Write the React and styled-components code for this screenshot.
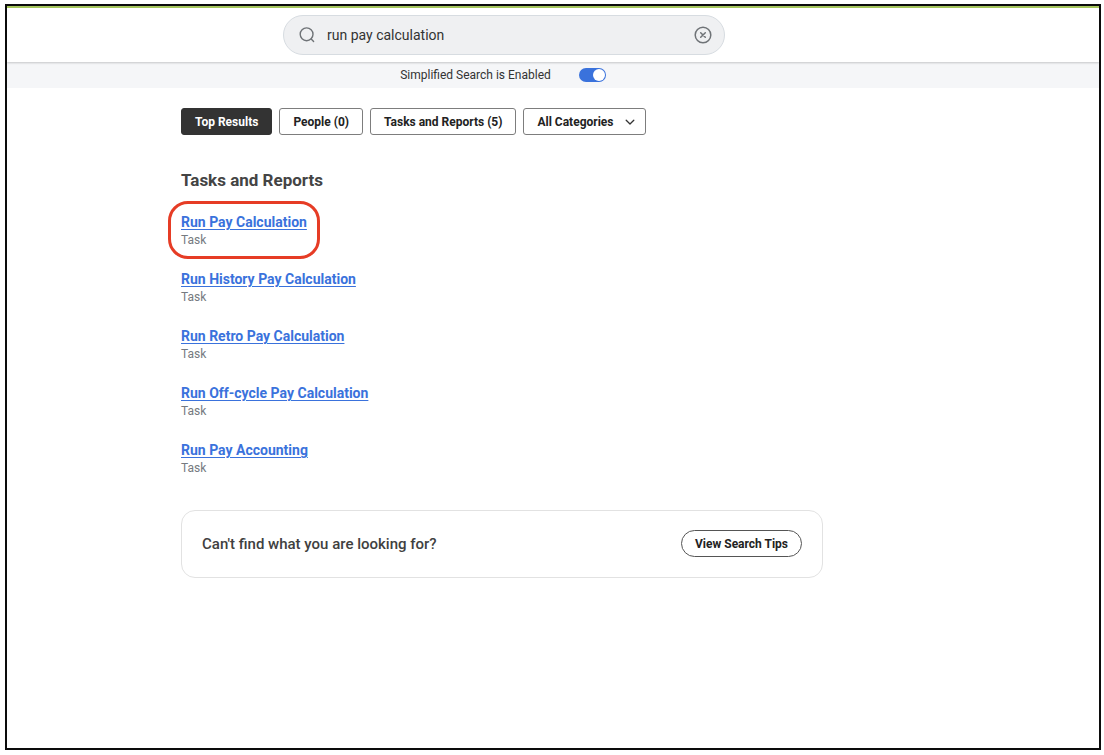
import React, { useState } from "react";
import styled, { createGlobalStyle, css } from "styled-components";

const GlobalStyle = createGlobalStyle`
  *, *::before, *::after { box-sizing: border-box; }
  body {
    margin: 0;
    background: #ffffff;
    color: #333333;
    font-family: Roboto, "Liberation Sans", sans-serif;
  }
  button, input, select { font-family: inherit; }
`;

const Page = styled.div`
  display: flex;
  min-height: 100vh;
  padding: 4px 3px 5px 5px;
`;

const Frame = styled.div`
  flex: 1;
  display: flex;
  flex-direction: column;
  border: 2px solid #0c0c0c;
`;

const Header = styled.header`
  position: relative;
  display: flex;
  justify-content: center;
  padding: 7px 100px 7px 2px;
  border-top: 2px solid #a5c55c;
  background: #ffffff;
  box-shadow: 0 1px 2px rgba(0, 0, 0, 0.2);
`;

const SearchBox = styled.form`
  display: flex;
  align-items: center;
  width: 442px;
  height: 40px;
  padding: 0 12px 0 15px;
  border: 1px solid #d7dce1;
  border-radius: 20px;
  background: #eff0f2;
  color: #6f7377;
`;

const SearchInput = styled.input`
  flex: 1;
  min-width: 0;
  height: 24px;
  margin: 0 12px;
  padding: 0;
  border: 0;
  outline: 0;
  background: transparent;
  color: #333333;
  font-size: 14px;
`;

const IconButton = styled.button`
  display: flex;
  padding: 0;
  border: 0;
  background: transparent;
  color: inherit;
  cursor: pointer;
`;

const ModeBar = styled.div`
  display: flex;
  justify-content: center;
  height: 26px;
  padding-right: 100px;
  background: #f5f6f8;
`;

const ModeLabel = styled.label`
  display: flex;
  align-items: center;
  gap: 28px;
  color: #333333;
  font-size: 12px;
`;

const Toggle = styled.input`
  appearance: none;
  display: flex;
  width: 27px;
  height: 14px;
  margin: 0;
  padding: 1px;
  border-radius: 7px;
  background: #a0a5ab;
  cursor: pointer;

  &::before {
    content: "";
    width: 12px;
    height: 12px;
    border-radius: 50%;
    background: #ffffff;
  }

  &:checked {
    justify-content: flex-end;
    background: #3a72dc;
  }
`;

const Main = styled.main`
  width: 100%;
  padding: 20px 102px 24px 0;
`;

const Results = styled.div`
  max-width: 642px;
  margin: 0 auto;
`;

const Filters = styled.div`
  display: flex;
  flex-wrap: wrap;
  gap: 7px;
`;

const filterStyle = css`
  height: 27px;
  border: 1px solid #7d7d7d;
  border-radius: 3px;
  background: #ffffff;
  color: #222222;
  font-size: 12px;
  font-weight: 700;
  line-height: 24px;
  cursor: pointer;
`;

const FilterButton = styled.button`
  ${filterStyle}
  padding: 0 13px;
  ${(p) =>
    p.$active &&
    css`
      border-color: #333333;
      background: #333333;
      color: #ffffff;
    `}
`;

const SelectWrap = styled.div`
  display: grid;
  align-items: center;

  > * { grid-area: 1 / 1; }

  > svg {
    justify-self: end;
    margin-right: 11px;
    pointer-events: none;
  }
`;

const CategorySelect = styled.select`
  ${filterStyle}
  appearance: none;
  padding: 0 31px 0 13px;
`;

const Heading = styled.h2`
  margin: 34px 0 21px;
  color: #444444;
  font-size: 17px;
  font-weight: 700;
  line-height: 22px;
`;

const ResultList = styled.ul`
  display: flex;
  flex-direction: column;
  gap: 20px;
  margin: 0;
  padding: 0;
  list-style: none;
`;

const ResultItem = styled.li`
  position: relative;
  width: fit-content;

  ${(p) =>
    p.$highlighted &&
    css`
      &::after {
        content: "";
        position: absolute;
        inset: -11px -13px -10px;
        border: 3px solid #e63c25;
        border-radius: 20px;
        pointer-events: none;
      }
    `}
`;

const ResultLink = styled.a`
  display: block;
  color: #3a72dc;
  font-size: 14px;
  font-weight: 700;
  line-height: 20px;
  text-decoration: underline;
  text-decoration-thickness: 1px;
  text-underline-offset: 2px;
`;

const ResultType = styled.div`
  color: #757a80;
  font-size: 12px;
  line-height: 17px;
`;

const HelpCard = styled.section`
  display: flex;
  align-items: center;
  justify-content: space-between;
  margin-top: 33px;
  padding: 19px 20px 20px;
  border: 1px solid #e2e2e2;
  border-radius: 14px;
`;

const HelpText = styled.p`
  margin: 0;
  color: #404040;
  font-size: 15px;
  font-weight: 500;
  line-height: 24px;
`;

const TipsButton = styled.button`
  height: 27px;
  padding: 0 13px;
  border: 1px solid #555555;
  border-radius: 14px;
  background: #ffffff;
  color: #222222;
  font-size: 12px;
  font-weight: 700;
  cursor: pointer;
`;

const SearchIcon = () => (
  <svg width="16" height="16" viewBox="0 0 16 16" fill="none" stroke="currentColor" strokeWidth="1.4" aria-hidden="true">
    <circle cx="7.6" cy="7.3" r="6.4" />
    <path d="M12.2 12 14.6 14.4" strokeLinecap="round" />
  </svg>
);

const ClearIcon = () => (
  <svg width="18" height="18" viewBox="0 0 18 18" fill="none" stroke="currentColor" strokeWidth="1.5" aria-hidden="true">
    <circle cx="9" cy="9" r="7.8" />
    <path d="m6.7 6.7 4.6 4.6m0-4.6-4.6 4.6" strokeLinecap="round" />
  </svg>
);

const ChevronIcon = () => (
  <svg width="10" height="10" viewBox="0 0 10 10" fill="none" stroke="#333333" strokeWidth="1.3" aria-hidden="true">
    <path d="m1.2 3.2 3.8 3.8 3.8-3.8" strokeLinecap="round" strokeLinejoin="round" />
  </svg>
);

const filters = ["Top Results", "People (0)", "Tasks and Reports (5)"];

const tasks = [
  "Run Pay Calculation",
  "Run History Pay Calculation",
  "Run Retro Pay Calculation",
  "Run Off-cycle Pay Calculation",
  "Run Pay Accounting",
];

export default function App() {
  const [query, setQuery] = useState("run pay calculation");
  const [simplified, setSimplified] = useState(true);
  const [active, setActive] = useState(filters[0]);

  return (
    <>
      <GlobalStyle />
      <Page>
        <Frame>
          <Header>
            <SearchBox role="search" onSubmit={(e) => e.preventDefault()}>
              <SearchIcon />
              <SearchInput
                type="text"
                aria-label="Search"
                value={query}
                onChange={(e) => setQuery(e.target.value)}
              />
              <IconButton type="button" aria-label="Clear search" onClick={() => setQuery("")}>
                <ClearIcon />
              </IconButton>
            </SearchBox>
          </Header>
          <ModeBar>
            <ModeLabel>
              Simplified Search is Enabled
              <Toggle
                type="checkbox"
                role="switch"
                checked={simplified}
                onChange={(e) => setSimplified(e.target.checked)}
              />
            </ModeLabel>
          </ModeBar>
          <Main>
            <Results>
              <Filters>
                {filters.map((name) => (
                  <FilterButton key={name} type="button" $active={name === active} onClick={() => setActive(name)}>
                    {name}
                  </FilterButton>
                ))}
                <SelectWrap>
                  <CategorySelect aria-label="Category">
                    <option>All Categories</option>
                  </CategorySelect>
                  <ChevronIcon />
                </SelectWrap>
              </Filters>
              <Heading>Tasks and Reports</Heading>
              <ResultList>
                {tasks.map((name, i) => (
                  <ResultItem key={name} $highlighted={i === 0}>
                    <ResultLink href="#">{name}</ResultLink>
                    <ResultType>Task</ResultType>
                  </ResultItem>
                ))}
              </ResultList>
              <HelpCard>
                <HelpText>Can't find what you are looking for?</HelpText>
                <TipsButton type="button">View Search Tips</TipsButton>
              </HelpCard>
            </Results>
          </Main>
        </Frame>
      </Page>
    </>
  );
}
